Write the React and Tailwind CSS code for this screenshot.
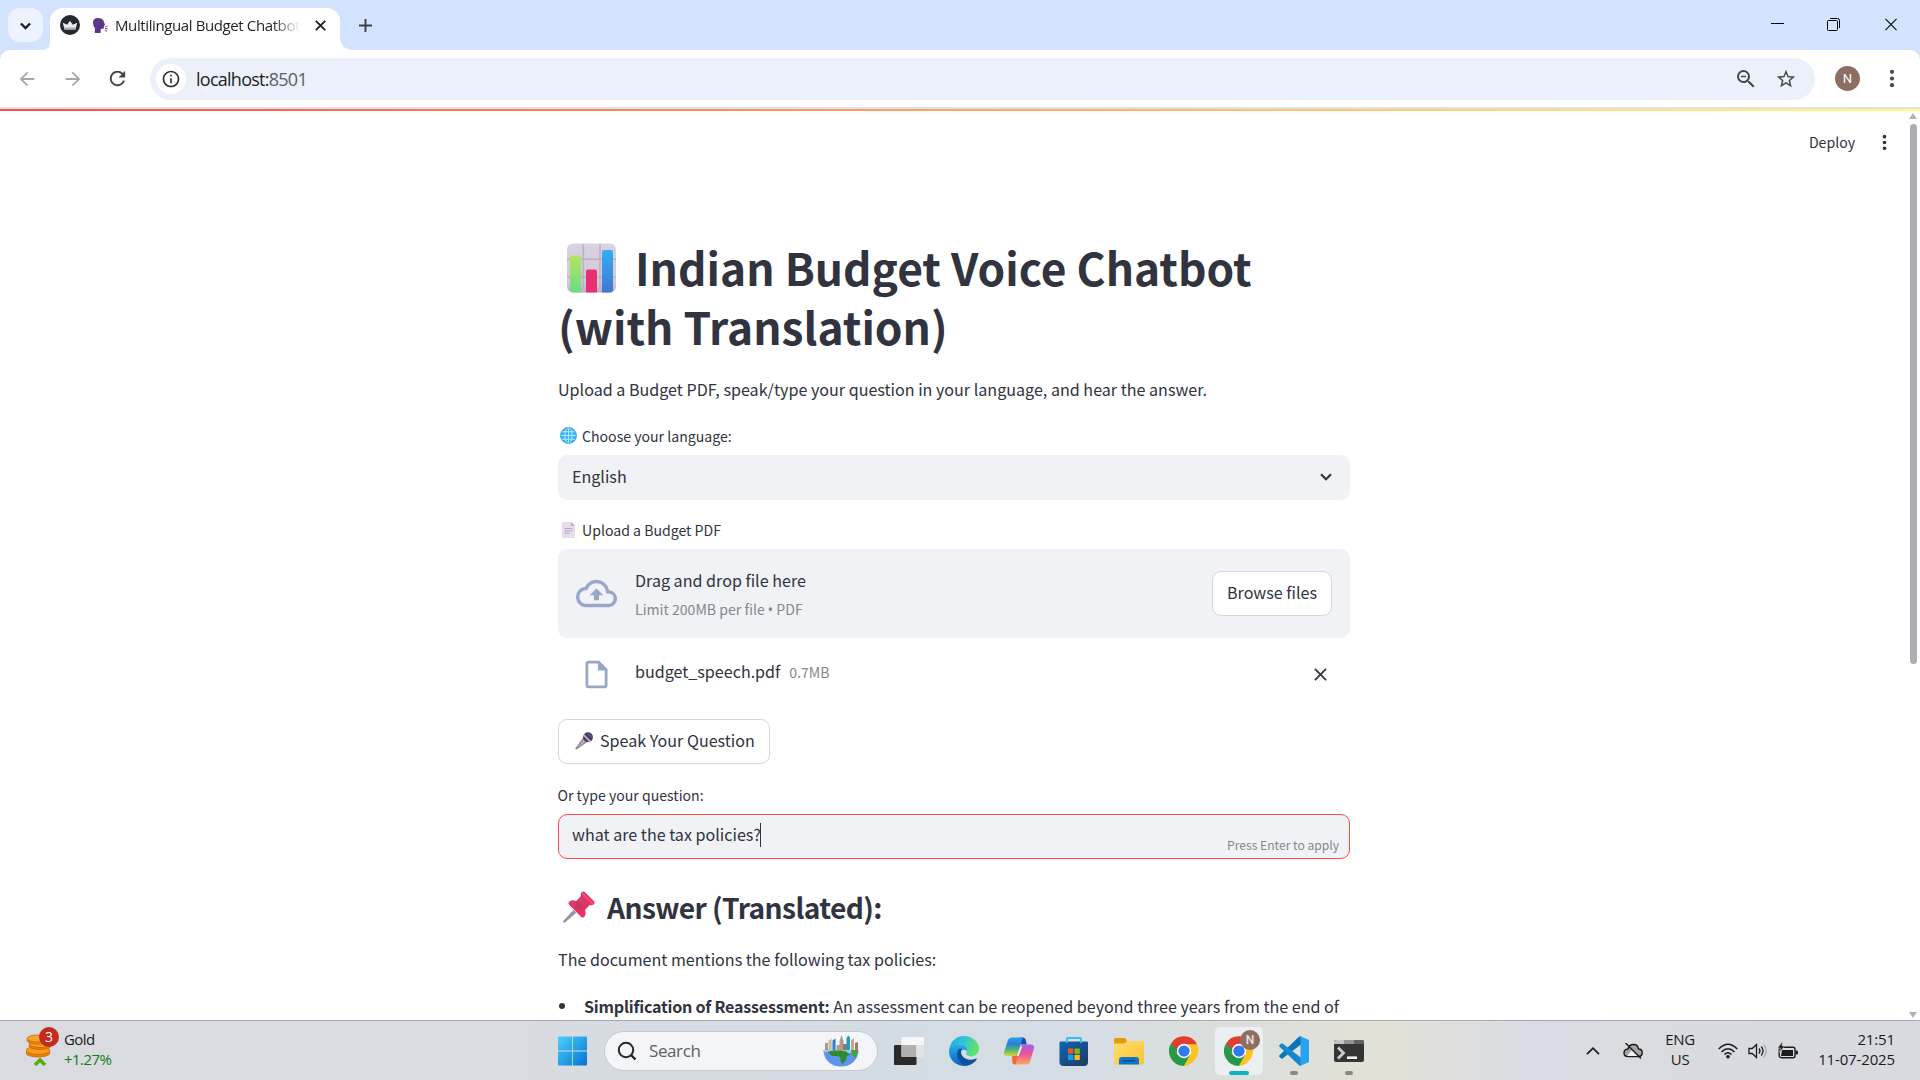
import React from "react";

const SRC = "font-['Noto_Sans_CJK_SC','Noto_Sans',sans-serif]";
const UI = "font-['Open_Sans','Noto_Sans',sans-serif]";

const Path = ({ d, className }) => (
  <svg viewBox="0 0 24 24" className={className} fill="currentColor"><path d={d} /></svg>
);

const ARROW = "M20 11H7.83l5.59-5.59L12 4l-8 8 8 8 1.41-1.41L7.83 13H20v-2z";
const RELOAD = "M17.65 6.35C16.2 4.9 14.21 4 12 4c-4.42 0-7.99 3.58-7.99 8s3.57 8 7.99 8c3.73 0 6.84-2.55 7.73-6h-2.08c-.82 2.33-3.04 4-5.65 4-3.31 0-6-2.69-6-6s2.69-6 6-6c1.66 0 3.14.69 4.22 1.78L13 11h7V4l-2.35 2.35z";
const INFO = "M11 7h2v2h-2zm0 4h2v6h-2zm1-9C6.48 2 2 6.48 2 12s4.48 10 10 10 10-4.48 10-10S17.52 2 12 2zm0 18c-4.41 0-8-3.59-8-8s3.59-8 8-8 8 3.59 8 8-3.59 8-8 8z";
const STAR = "M22 9.24l-7.19-.62L12 2 9.19 8.63 2 9.24l5.46 4.73L5.82 21 12 17.27 18.18 21l-1.63-7.03L22 9.24zM12 15.4l-3.76 2.27 1-4.28-3.32-2.88 4.38-.38L12 6.1l1.71 4.04 4.38.38-3.32 2.88 1 4.28L12 15.4z";
const ZOOM_OUT = "M15.5 14h-.79l-.28-.27A6.471 6.471 0 0 0 16 9.5 6.5 6.5 0 1 0 9.5 16c1.61 0 3.09-.59 4.23-1.57l.27.28v.79l5 4.99L20.49 19l-4.99-5zm-6 0C7.01 14 5 11.99 5 9.5S7.01 5 9.5 5 14 7.01 14 9.5 11.99 14 9.5 14zM7 8.7h5v1.6H7z";
const CLOUD = "M19.35 10.04A7.49 7.49 0 0012 4C9.11 4 6.6 5.64 5.35 8.04A5.994 5.994 0 000 14c0 3.31 2.69 6 6 6h13c2.76 0 5-2.24 5-5 0-2.64-2.05-4.78-4.65-4.96zM19 18H6c-2.21 0-4-1.79-4-4 0-2.05 1.53-3.76 3.56-3.97l1.07-.11.5-.95A5.469 5.469 0 0112 6c2.62 0 4.88 1.86 5.39 4.43l.3 1.5 1.53.11A2.98 2.98 0 0122 15c0 1.65-1.35 3-3 3zM8 13h2.55v3h2.9v-3H16l-4-4z";
const FILE = "M14 2H6c-1.1 0-1.99.9-1.99 2L4 20c0 1.1.89 2 1.99 2H18c1.1 0 2-.9 2-2V8l-6-6zM6 20V4h7v5h5v11H6z";

const Cross = ({ className, w = 2 }) => (
  <svg viewBox="0 0 14 14" className={className} fill="none" stroke="currentColor" strokeWidth={w}><path d="M1 1l12 12M13 1L1 13" /></svg>
);

const Chevron = ({ className, w = 2.4 }) => (
  <svg viewBox="0 0 12 8" className={className} fill="none" stroke="currentColor" strokeWidth={w}><path d="M1 1.3l5 5 5-5" /></svg>
);

const Dots = ({ className }) => (
  <svg viewBox="0 0 6 20" className={className} fill="currentColor">
    <circle cx="3" cy="3" r="2.200" /><circle cx="3" cy="10" r="2.200" /><circle cx="3" cy="17" r="2.200" />
  </svg>
);

const ChartEmoji = () => (
  <svg viewBox="0 0 50 50" className="ml-[9px] mr-[18px] h-[50px] w-[50px] shrink-0">
    <defs>
      <linearGradient id="cg" x1="0" y1="0" x2="0" y2="1"><stop offset="0" stopColor="#b4e65c" /><stop offset="1" stopColor="#6bdc86" /></linearGradient>
      <linearGradient id="cb" x1="0" y1="0" x2="0" y2="1"><stop offset="0" stopColor="#35acf6" /><stop offset="1" stopColor="#3f78cf" /></linearGradient>
      <linearGradient id="cbg" x1="0" y1="0" x2="0" y2="1"><stop offset="0" stopColor="#d9d2e0" /><stop offset=".8" stopColor="#d3c9dc" /><stop offset="1" stopColor="#bda9d3" /></linearGradient>
    </defs>
    <rect x="0" y="0.5" width="49" height="49" rx="6" fill="url(#cbg)" />
    <path d="M16.3 1v48M33 1v48M0 16.300h49M0 34h49" stroke="#b9b2c0" strokeWidth="1.6" />
    <path d="M3 14.500q0-2 2-2h7q2 0 2 2v35H6q-3 0-3-3z" fill="url(#cg)" />
    <path d="M19 28.500q0-2 2-2h7q2 0 2 2v21H19z" fill="#e5316f" />
    <path d="M35 9q0-2 2-2h7q2 0 2 2v37.500q0 3-3 3h-8z" fill="url(#cb)" />
  </svg>
);

const GlobeEmoji = () => (
  <svg viewBox="0 0 17 17" className="ml-[2px] mr-[5px] h-[17px] w-[17px] shrink-0">
    <circle cx="8.500" cy="8.500" r="8.200" fill="#38b6f4" />
    <g fill="none" stroke="#b5e6fb" strokeWidth="1"><ellipse cx="8.500" cy="8.500" rx="3.600" ry="8" /><path d="M8.500.5v16M.5 8.500h16M1.500 4.700h14M1.500 12.300h14" /></g>
    <circle cx="8.500" cy="8.500" r="7.900" fill="none" stroke="#2c9fe0" strokeWidth=".8" />
  </svg>
);

const PageEmoji = () => (
  <svg viewBox="0 0 13 16" className="ml-1 mr-[7px] h-4 w-[13px] shrink-0">
    <path d="M.8 0H9l4 4v11.200q0 .8-.8.8H.8Q0 16 0 15.200V.8Q0 0 .8 0z" fill="#e6dcee" />
    <path d="M9 0l4 4H9.800Q9 4 9 3.200z" fill="#b9a9c8" />
    <path d="M2.500 6.500h8M2.500 8.800h8M2.500 11.100h5" stroke="#b4a7bf" strokeWidth="1" />
  </svg>
);

const MicEmoji = () => (
  <svg viewBox="0 0 18 18" className="mr-[7px] h-[18px] w-[18px] shrink-0">
    <path d="M8.500 5L13 9.500 2 17.200q-1 .5-1.500-.2T.8 15.700z" fill="#8f8796" />
    <path d="M9.500 6.500l2 2L1.500 16.500z" fill="#b8b0bd" />
    <circle cx="13" cy="5.200" r="4.900" fill="#4b3b5e" />
    <path d="M8.600 2.800l7 7" stroke="#c5bccb" strokeWidth="1.700" />
    <path d="M12.500 1l4.500 4.500" stroke="#756786" strokeWidth="1" />
  </svg>
);

const PinEmoji = () => (
  <svg viewBox="0 0 32 32" className="ml-[5px] mr-[12px] h-8 w-8 shrink-0">
    <defs><linearGradient id="pin" x1="0" y1="0" x2="1" y2="1"><stop offset="0" stopColor="#d6478c" /><stop offset=".5" stopColor="#dd3466" /><stop offset="1" stopColor="#f92f60" /></linearGradient></defs>
    <path d="M10.500 19l2.700 2.700L2 31.400q-1.200.5-1.600-.1t.1-1.500z" fill="#998ea4" />
    <path d="M18.500 1.500q1.500-2 3.500-.2L30.800 10q1.800 2-.3 3.500-1.700 1-3.700.5L22 19q1.500 3.500-.5 6.500-1.500 2-3.500.2L6.300 14q-1.800-2 .2-3.500 3-2 6.500-.5l5-5q-.5-2 .5-3.500z" fill="url(#pin)" />
    <path d="M15 10l5 5-4 4-5-4z" fill="#b6385c" opacity=".6" />
    <path d="M19.500 2.500L30 13" stroke="#ff5c80" strokeWidth="2" opacity=".7" />
  </svg>
);

const ChromeIcon = () => (
  <svg viewBox="0 0 48 48" className="h-[30px] w-[30px]">
    <path d="M24 24l10.400 6L24 48A24 24 0 0 1 3.200 12L13.600 30z" fill="#279847" />
    <path d="M24 13h20.800q5 11-1.500 22T24 48l10.400-18z" fill="#fcc31e" />
    <path d="M3.200 12A24 24 0 0 1 44.800 13H24q-7 0-10.400 6.500L12 27z" fill="#e33b2e" />
    <path d="M3.200 12L13.600 30l4-6z" fill="#279847" />
    <circle cx="24" cy="24" r="11.500" fill="#fff" /><circle cx="24" cy="24" r="9" fill="#2f78ee" />
  </svg>
);

const EdgeIcon = () => (
  <svg viewBox="0 0 30 30" className="h-[30px] w-[30px]">
    <defs>
      <linearGradient id="e1" x1="0" y1="0" x2="1" y2=".3"><stop offset="0" stopColor="#1fa5e6" /><stop offset=".5" stopColor="#32c4d8" /><stop offset="1" stopColor="#5fe26a" /></linearGradient>
      <linearGradient id="e2" x1="0" y1="0" x2="0" y2="1"><stop offset="0" stopColor="#28afe8" /><stop offset="1" stopColor="#0b62c4" /></linearGradient>
    </defs>
    <path d="M.2 13.500C1.500 5.200 7.500 0 15 0c8.500 0 15 6 15 12.500 0 5-3.700 7.800-8 7.800-3 0-5-1-5-2.200 0-.9 1.300-1.400 1.300-3.600 0-3.300-3.300-6-8-6-4.500 0-8 2-10.100 5z" fill="url(#e1)" />
    <path d="M.2 13.500C2 10.300 5.800 8.200 10 8.200c5 0 8.300 2.900 8.300 6 0 .6-.1 1-.3 1.500-1.400-3.200-6.600-2.400-7.500 2.300C9.700 23 13.500 27.500 19 29.500 11 31.500 0 26.500 0 15z" fill="url(#e2)" />
    <path d="M10.500 12.700c-5 4-2 15.500 8 16.900 4-.8 7.500-3.300 9.200-6.300.4-.7-.2-1-.8-.7-5.500 2.700-13 .7-14.600-4.800-.5-1.700-.3-3.500.7-5z" fill="#0d529c" />
  </svg>
);

const CopilotIcon = () => (
  <svg viewBox="0 0 30 30" className="h-[30px] w-[30px]">
    <defs>
      <linearGradient id="c1" x1="0" y1="0" x2="0" y2="1"><stop offset="0" stopColor="#22a0ee" /><stop offset=".35" stopColor="#2c7fd6" /><stop offset=".7" stopColor="#52bf6c" /><stop offset="1" stopColor="#e7cf35" /></linearGradient>
      <linearGradient id="c2" x1="0" y1="0" x2="0" y2="1"><stop offset="0" stopColor="#a85be9" /><stop offset=".5" stopColor="#ee5797" /><stop offset="1" stopColor="#ffa55e" /></linearGradient>
    </defs>
    <path d="M15 1.500h4q2 0 2.600 2l1.200 5h-6z" fill="#1b4bb2" />
    <path d="M8 19h6.500l-1.500 9.500h-2q-2 0-2.600-2z" fill="#ee6a3a" />
    <path d="M7.500 1.500H17q1.800 0 1.300 1.800L14 17q-.8 3-4 3H3q-4 0-2.800-4.500L4 4q.8-2.500 3.500-2.500z" fill="url(#c1)" />
    <path d="M20 8.500h7q4 0 2.800 4.500L26 25.500q-.8 3-3.500 3H13q-1.500 0-1-1.800L16 12q.8-3.500 4-3.500z" fill="url(#c2)" />
    <path d="M16.500 10.500h1.800l-3.600 9.500h-2z" fill="#f3e9ee" />
  </svg>
);

const StoreIcon = () => (
  <svg viewBox="0 0 30 30" className="h-[30px] w-[30px]">
    <defs><linearGradient id="st" x1="0" y1="0" x2="1" y2="1"><stop offset="0" stopColor="#0f64b4" /><stop offset="1" stopColor="#203a63" /></linearGradient></defs>
    <path d="M2 5.500h26q1 0 1 1V26q0 4-4 4H4.500Q.5 30 .5 26V6.500q0-1 1.500-1z" fill="url(#st)" />
    <path d="M8 7V3q0-1 1-1h12q1 0 1 1v4" fill="none" stroke="#2cc1f4" strokeWidth="1.800" />
    <path d="M9 12.500h5.300v5.300H9z" fill="#f35325" /><path d="M15.500 12.500h5.300v5.300h-5.300z" fill="#81bc06" />
    <path d="M9 18.800h5.300v5.200H9z" fill="#05a6f0" /><path d="M15.500 18.800h5.300v5.200h-5.300z" fill="#ffba08" />
  </svg>
);

const FolderIcon = () => (
  <svg viewBox="0 0 30 30" className="h-[30px] w-[30px]">
    <defs><linearGradient id="fo" x1="0" y1="0" x2="1" y2="1"><stop offset="0" stopColor="#ffdc70" /><stop offset="1" stopColor="#fcc42f" /></linearGradient></defs>
    <path d="M0 3.500q0-1.500 1.500-1.500H10q1 0 1.700.8L13 4.500v4H0z" fill="#e09c0a" />
    <path d="M0 7.500h9.500q1 0 1.700-.8l1.500-1.200q.7-.5 1.500-.5H28.500q1.500 0 1.500 1.500v20q0 2-2 2H2q-2 0-2-2z" fill="url(#fo)" />
    <path d="M5 28.500V24q0-3 3-3h14q3 0 3 3v4.500z" fill="#1173c5" /><path d="M9 24.800h12" stroke="#0a4c92" strokeWidth="1.400" />
  </svg>
);

const CodeIcon = () => (
  <svg viewBox="0 0 30 30" className="h-[30px] w-[30px]">
    <path d="M.5 19.300L20 .8q1-.8 2-.4v8L3.500 22.400q-.8.500-1.500-.1l-1.500-1.300q-.8-.8 0-1.700z" fill="#0d73b8" />
    <path d="M.5 10.700L20 29.300q1 .8 2 .4v-8L3.500 7.600Q2.700 7.100 2 7.700L.5 9q-.8.800 0 1.700z" fill="#1288cf" />
    <path d="M21.500.3L29 3.500q1 .5 1 1.500v20q0 1-1 1.500l-7.500 3.300z" fill="#27a3f1" />
  </svg>
);

const TerminalIcon = () => (
  <svg viewBox="0 0 30 30" className="h-[30px] w-[30px]">
    <rect x="0" y="4" width="30" height="22" rx="2" fill="#353535" />
    <path d="M2 4h8v4H0V6q0-2 2-2z" fill="#c3c3c3" /><path d="M10 4h10v4H10z" fill="#939393" /><path d="M20 4h8q2 0 2 2v2H20z" fill="#616161" />
    <path d="M4 11.500l5.500 5.500L4 22.500" fill="none" stroke="#ccc" strokeWidth="2.800" /><path d="M13 21.700h10" stroke="#f2f2f2" strokeWidth="2.600" />
  </svg>
);

const TaskViewIcon = () => (
  <svg viewBox="0 0 30 30" className="h-[30px] w-[30px]">
    <rect x="0" y="9" width="22.500" height="20" rx="1" fill="#2b2b2a" />
    <rect x="7.500" y="1" width="22.500" height="20" rx="1" fill="#f7f7f7" />
    <path d="M7.500 9h15v12h-15z" fill="#b0b0b0" /><path d="M22.500 9H30v12h-7.500z" fill="#e2e3e5" />
  </svg>
);

const CityGlobe = () => (
  <svg viewBox="0 0 36 32" className="h-8 w-9">
    <path d="M2 8h3v9H2z" fill="#9d9d90" /><path d="M5.500 5h2.200V3.500h1V17H5.500z" fill="#cbb9a2" /><path d="M9.500 5.500l3-2V17h-3z" fill="#2c7cd2" />
    <path d="M13.500 10h3V6l2-6 2 6v11h-7z" fill="#b59a90" /><path d="M20 9h4v8h-4z" fill="#8f7470" /><path d="M23.500 3l2-2.500 1.500 2V17h-3.500z" fill="#219fae" />
    <path d="M28 5l3-1.500V17h-3z" fill="#c4a68e" /><path d="M32 8l3-1v9h-3z" fill="#ab7463" />
    <path d="M.5 15h35q0 7-5 12-5 4.500-12.500 4.500T5.500 27Q.5 22 .5 15z" fill="#5e93ee" />
    <path d="M.8 15h34.400q0 3-.8 5L28 17.500l-3 1-7-3-5 2.500-8-1.500-3.500 1z" fill="#9cc7ee" />
    <path d="M5 17l5-1.500h8l5 1 4 3-3 1.500-1.500 5-3.500 3-1.500-3v-4l-4-1-4 0-3-2z" fill="#2f8a2c" /><path d="M28 15h7v3l-3 5-3-3z" fill="#46a136" />
  </svg>
);

function TitleBar() {
  return (
    <div className={`flex h-[50px] bg-[#d3e3fd] ${UI}`}>
      <div className="ml-2 mt-2 flex h-[34px] w-[35px] items-center justify-center rounded-[12px] bg-[#ecf2fe]">
        <Chevron className="mt-px h-[8px] w-[11px] text-[#1f1f1f]" w={2.600} />
      </div>
      <svg viewBox="0 0 14 14" className="-mr-[7px] ml-0 h-[14px] w-[14px] shrink-0 self-end text-white" fill="currentColor"><path d="M0 14Q7 14 7 6V0H14V14z" /></svg>
      <div className="mt-[8px] flex h-[42px] w-[290px] items-center rounded-t-[13px] bg-white pl-[10px]">
        <svg viewBox="0 0 20 20" className="-mt-2 h-5 w-5 shrink-0">
          <circle cx="10" cy="10" r="10" fill="#262730" />
          <path d="M2.800 7.800l4.400 2L10 5.800l2.800 4 4.400-2-1.700 6.700h-11z" fill="#eceef2" /><path d="M4 12.500h12l-.5 2h-11z" fill="#a8abb5" />
        </svg>
        <svg viewBox="0 0 15 15" className="-mt-2 ml-[13px] h-[15px] w-[15px] shrink-0">
          <path d="M0 4.500Q0 0 5 0t6 4l1 3-1 .8-.2 2.700-3 .5L7.500 15H1.700L2 10.500Q0 8 0 4.500z" fill="#5a3789" />
          <path d="M12 9l2.500-1M12 10.700h2.800M12 12l2 1.500" stroke="#8b76a8" strokeWidth="1.200" />
        </svg>
        <span className="-mt-2 ml-[7px] w-[185px] overflow-hidden whitespace-nowrap bg-gradient-to-r from-[#1f1f1f] from-85% to-transparent bg-clip-text text-[15px] leading-6 tracking-[-0.39px] text-transparent">Multilingual Budget Chatbot</span>
        <Cross className="-mt-2 ml-[15px] h-[11px] w-[11px] text-[#1f1f1f]" w={2.300} />
      </div>
      <svg viewBox="0 0 14 14" className="h-[14px] w-[14px] shrink-0 self-end text-white" fill="currentColor"><path d="M14 14Q0 14 0 0V14z" /></svg>
      <svg viewBox="0 0 13 13" className="ml-[5px] mt-[19px] h-[13px] w-[13px]" stroke="#3c4043" strokeWidth="1.900"><path d="M6.500 0v13M0 6.500h13" /></svg>
      <div className="ml-auto flex pr-[22px] pt-[18px] text-black">
        <svg viewBox="0 0 13 13" className="h-[13px] w-[13px]" stroke="currentColor"><path d="M0 5.500h13" /></svg>
        <svg viewBox="0 0 13 13" className="ml-[43px] h-[13px] w-[13px]" fill="none" stroke="currentColor"><rect x=".5" y="2.500" width="10" height="10" rx="1" /><path d="M3 .5h7.500q2 0 2 2V10" /></svg>
        <Cross className="ml-[44px] h-[13px] w-[14px]" w={1.100} />
      </div>
    </div>
  );
}

function Toolbar() {
  return (
    <div className="bg-[#d3e3fd]">
      <div className={`flex h-[57px] items-center rounded-t-[10px] bg-white ${UI}`}>
        <Path d={ARROW} className="ml-[16px] h-[22px] w-[22px] text-[#a5a7a9]" />
        <Path d={ARROW} className="ml-[24px] h-[22px] w-[22px] rotate-180 text-[#a5a7a9]" />
        <Path d={RELOAD} className="ml-[22px] h-[23px] w-[23px] text-[#474747]" />
        <div className="ml-[21px] flex h-[42px] w-[1665px] items-center rounded-full bg-[#ebf0fa] pl-[6px]">
          <div className="flex h-[30px] w-[30px] items-center justify-center rounded-full bg-white"><Path d={INFO} className="h-[20px] w-[20px] text-[#2e2f31]" /></div>
          <span className="ml-[10px] text-[18px] leading-6 tracking-[-0.74px] text-[#1f1f1f]">localhost:<span className="text-[#5a5e66]">8501</span></span>
          <Path d={ZOOM_OUT} className="ml-auto h-6 w-6 text-[#474747]" />
          <Path d={STAR} className="ml-[17px] mr-[18px] h-[22px] w-[22px] text-[#474747]" />
        </div>
        <div className="ml-5 flex h-[25px] w-[25px] items-center justify-center rounded-full bg-[#8d6e63] font-[Roboto] text-[13px] text-white">N</div>
        <Dots className="ml-[28px] h-[19px] w-[8px] text-[#474747]" />
      </div>
    </div>
  );
}

const label = "flex h-6 items-center whitespace-nowrap text-[14.100px] leading-6";

function Page() {
  return (
    <div className={`relative h-[909px] overflow-hidden bg-white text-[16.100px] text-[#31333f] ${SRC}`}>
      <div className="absolute right-[33px] top-[19px] flex items-center text-[14.100px]">
        <span className="mr-[27px] leading-6">Deploy</span>
        <Dots className="h-[17px] w-[5px]" />
      </div>
      <div className="absolute right-[3px] top-[2px] flex flex-col items-center">
        <svg viewBox="0 0 8 6" className="h-[6px] w-2" fill="#b0b0b5"><path d="M4 0l4 6H0z" /></svg>
        <div className="mt-[5px] h-[540px] w-[7px] rounded-full bg-[#adadb2]" />
        <svg viewBox="0 0 8 6" className="mt-[348px] h-[6px] w-2" fill="#b0b0b5"><path d="M4 6l4-6H0z" /></svg>
      </div>
      <div className="ml-[558px] flex w-[792px] flex-col pt-[127px]">
        <h1 className="whitespace-nowrap text-[44.300px] font-bold leading-[59.400px]">
          <span className="flex items-center"><ChartEmoji /><span>Indian Budget Voice Chatbot</span></span>
          <span className="block">(with Translation)</span>
        </h1>
        <p className="mt-[18px] whitespace-nowrap leading-[29px]">Upload a Budget PDF, speak/type your question in your language, and hear the answer.</p>
        <div className={`${label} mt-[20px]`}><GlobeEmoji />Choose your language:</div>
        <div className="mt-[7px] flex h-[45px] items-center justify-between rounded-[9px] bg-[#f0f2f6] pl-[14px] pr-[18px] leading-[29px]">
          <span className="-mt-px">English</span><Chevron className="h-[8px] w-[12px]" w={2.200} />
        </div>
        <div className={`${label} mt-[18px]`}><PageEmoji />Upload a Budget PDF</div>
        <div className="mt-[7px] flex h-[89px] items-center rounded-[9px] bg-[#f0f2f6] pl-[18px] pr-[18px]">
          <Path d={CLOUD} className="h-[41px] w-[41px] text-[#98a7c7]" />
          <div className="ml-[18px] mt-[3px] flex flex-col">
            <span className="leading-[29px]">Drag and drop file here</span>
            <span className="text-[14.100px] leading-[28px] text-[#85878f]">Limit 200MB per file <span className="font-['Noto_Sans']">•</span> PDF</span>
          </div>
          <div className="ml-auto flex h-[45px] w-[120px] items-center justify-center rounded-[9px] border border-[#d6d7da] bg-white pb-px leading-[29px]">Browse files</div>
        </div>
        <div className="flex h-[65px] items-center pl-[22px] pr-[23px] pt-[9px]">
          <Path d={FILE} className="h-[33px] w-[33px] text-[#98a7c7]" />
          <span className="-mt-[6px] ml-[22px] leading-[29px]">budget_speech.pdf</span>
          <span className="-mt-[5px] ml-[9px] text-[14.100px] leading-[29px] text-[#85878f]">0.7MB</span>
          <Cross className="ml-auto h-[13px] w-[13px]" w={1.900} />
        </div>
        <div className="mt-4 flex h-[45px] w-[212px] items-center whitespace-nowrap rounded-[9px] border border-[#d6d7da] pb-px pl-4 leading-[29px]"><MicEmoji />Speak Your Question</div>
        <div className={`${label} mt-[19px]`}><span className="-ml-[0.5px]">Or type your question:</span></div>
        <div className="mt-[7px] flex h-[45px] items-center rounded-[9px] border border-[#ff4b4b] bg-[#f0f2f6] pl-[13px] pr-[10px]">
          <span className="-mt-[3px] leading-[29px]">what are the tax policies?</span>
          <span className="-ml-px -mt-[3px] h-6 w-px bg-[#31333f]" />
          <span className="ml-auto mt-[18px] text-[12.100px] leading-5 text-[#85878f]">Press Enter to apply</span>
        </div>
        <h3 className="mt-[29px] flex items-center whitespace-nowrap text-[28.200px] font-semibold leading-[38px] tracking-[-0.6px]"><PinEmoji />Answer (Translated):</h3>
        <p className="mt-[19px] whitespace-nowrap leading-[29px]">The document mentions the following tax policies:</p>
        <div className="mt-[18px] flex items-center whitespace-nowrap leading-[29px]">
          <span className="ml-px mr-[19px] h-[6px] w-[6px] rounded-full bg-[#31333f]" />
          <span><b className="font-semibold tracking-[-0.22px]">Simplification of Reassessment:</b> An assessment can be reopened beyond three years from the end of</span>
        </div>
      </div>
    </div>
  );
}

function Taskbar() {
  return (
    <div className={`flex h-[60px] items-center border-t border-[#a9abb0] bg-[linear-gradient(90deg,#dadbe1_0%,#d9dbe0_25%,#d5dce1_33%,#d4dce5_55%,#dadedd_62%,#e2e1d6_72%,#d9dce5_80%,#d9dbe1_84%,#d8dae0_100%)] text-[15px] text-[#1b1b1b] ${UI}`}>
      <div className="flex w-[558px] items-center pl-[26px]">
        <div className="relative h-[36px] w-[34px]">
          <svg viewBox="0 0 34 40" className="h-[40px] w-[34px]">
            <g stroke="#c76705" strokeWidth=".8"><ellipse cx="12" cy="20" rx="12" ry="4" fill="#e87f0b" /><ellipse cx="12" cy="17.500" rx="12" ry="4" fill="#f99c1c" /><ellipse cx="14" cy="13" rx="11" ry="3.500" fill="#e87f0b" /><ellipse cx="14" cy="11" rx="11" ry="3.500" fill="#f99c1c" /><ellipse cx="12" cy="7.500" rx="11" ry="3.500" fill="#ee8a11" /><ellipse cx="12" cy="5.500" rx="11" ry="3.500" fill="#fba42a" /></g>
            <path d="M9 32l5-5 5 5" fill="none" stroke="#5cab12" strokeWidth="3.600" />
          </svg>
          <div className="absolute left-[13px] top-[-6px] flex h-5 w-5 items-center justify-center rounded-full bg-[#c42b1c] text-[14px] leading-5 text-white">3</div>
        </div>
        <div className="-mt-[3px] ml-[4px] flex flex-col leading-5 tracking-[-0.55px]"><span>Gold</span><span className="text-[#107c10]">+1.27%</span></div>
      </div>
      <svg viewBox="0 0 30 30" className="h-[30px] w-[30px] shrink-0">
        <defs><linearGradient id="win" x1="0" y1="0" x2="1" y2="1"><stop offset="0" stopColor="#4cd0fc" /><stop offset="1" stopColor="#0273d2" /></linearGradient></defs>
        <path d="M0 1.500Q0 .5 1 .5h13.200v14H0zM15 .5h13q1 0 1 1v13H15zM0 15.500h14.200v14H1q-1 0-1-1zM15 15.500h14v13q0 1-1 1H15z" fill="url(#win)" />
      </svg>
      <div className="ml-4 flex h-10 w-[274px] items-center rounded-full border border-[#c6c9ce] bg-[#f3f5f8] pl-[12px] pr-[18px]">
        <svg viewBox="0 0 20 20" className="h-[20px] w-[20px]" fill="none" stroke="#262626" strokeWidth="2"><circle cx="9" cy="9" r="7.200" /><path d="M14 14l4.500 4.500" strokeWidth="2.400" /></svg>
        <span className="ml-[12px] text-[17px] tracking-[-0.4px] text-[#5c5e60]">Search</span>
        <span className="ml-auto"><CityGlobe /></span>
      </div>
      <div className="ml-4 flex items-center gap-[25px]">
        <TaskViewIcon /><EdgeIcon /><CopilotIcon /><StoreIcon /><FolderIcon /><ChromeIcon />
        <div className="relative -mx-[9px] flex h-12 w-12 items-center justify-center rounded-[5px] bg-[#eceff1]">
          <ChromeIcon />
          <div className="absolute right-[3px] top-[3px] flex h-5 w-5 items-center justify-center rounded-full bg-[#8d6e63] font-[Roboto] text-[12px] font-medium text-[#eee4e0]">N</div>
          <div className="absolute bottom-0 h-1 w-5 rounded-full bg-[#06b5c1]" />
        </div>
        <div className="relative flex justify-center"><CodeIcon /><div className="absolute -bottom-[9px] h-1 w-2 rounded-full bg-[#858788]" /></div>
        <div className="relative flex justify-center"><TerminalIcon /><div className="absolute -bottom-[9px] h-1 w-2 rounded-full bg-[#858788]" /></div>
      </div>
      <div className="ml-auto flex items-center pr-[25px] tracking-[-0.3px]">
        <svg viewBox="0 0 14 8" className="h-2 w-[14px]" fill="none" stroke="#1b1b1b" strokeWidth="1.700"><path d="M1 7.200l6-6 6 6" /></svg>
        <svg viewBox="0 0 20 16" className="ml-[23px] h-4 w-5" fill="none" stroke="#1b1b1b" strokeWidth="1.400">
          <path d="M5 13.500Q1 13.500 1 10t4-4q1-4.500 5.500-4.500T15.500 6q3.700 0 3.700 3.700T15.500 13.500z" fill="#a5a6aa" /><path d="M4 13l5-6 6 6z" fill="#f0f0f2" stroke="none" /><path d="M2.500 0L18 15.500" />
        </svg>
        <div className="-mt-[3px] ml-[17px] w-10 text-center leading-5">ENG<br />US</div>
        <svg viewBox="0 0 20 16" className="ml-[18px] h-4 w-5" fill="none" stroke="#1b1b1b" strokeWidth="1.500"><path d="M.7 6q9.300-9.500 18.600 0M3.500 9q6.500-6.500 13 0M6.500 11.500q3.500-3.500 7 0" /><circle cx="10" cy="13.700" r="1.800" fill="#1b1b1b" stroke="none" /></svg>
        <svg viewBox="0 0 20 16" className="ml-[10px] h-4 w-5" fill="none" stroke="#1b1b1b" strokeWidth="1.300"><path d="M1 5.500h3.200L8.500 1.500v13L4.200 10.500H1z" /><path d="M11 5.500q2 2.500 0 5M13.300 3.500q3.500 4.500 0 9" /><path d="M15.800 1.500q5 6.500 0 13" stroke="#a6a8ac" /></svg>
        <svg viewBox="0 0 20 16" className="ml-[10px] h-4 w-5 overflow-visible"><rect x="1.200" y="4.200" width="15.800" height="10.500" rx="2" fill="none" stroke="#1b1b1b" strokeWidth="1.400" /><path d="M4 7h11v6H3z" fill="#1b1b1b" /><path d="M17.500 7.500h1.500q1 0 1 2t-1 2h-1.500z" fill="#1b1b1b" /><path d="M4.500-1.500L-.3 5H2.500L1.200 9.500 6.800 3H4z" fill="#1b1b1b" stroke="#d9dbe1" strokeWidth=".5" /></svg>
        <div className="-mt-[3px] ml-[20px] whitespace-nowrap text-right leading-5 tracking-[-0.14px]">21:51<br />11-07-2025</div>
      </div>
    </div>
  );
}

export default function App() {
  return (
    <div className="h-[1080px] w-[1920px] overflow-hidden bg-white">
      <TitleBar />
      <Toolbar />
      <div className="h-[2px] bg-[#dfe1e3]" />
      <div className="h-[2px] bg-[linear-gradient(90deg,#ff4b4b,#fffd80)]" />
      <Page />
      <Taskbar />
    </div>
  );
}
